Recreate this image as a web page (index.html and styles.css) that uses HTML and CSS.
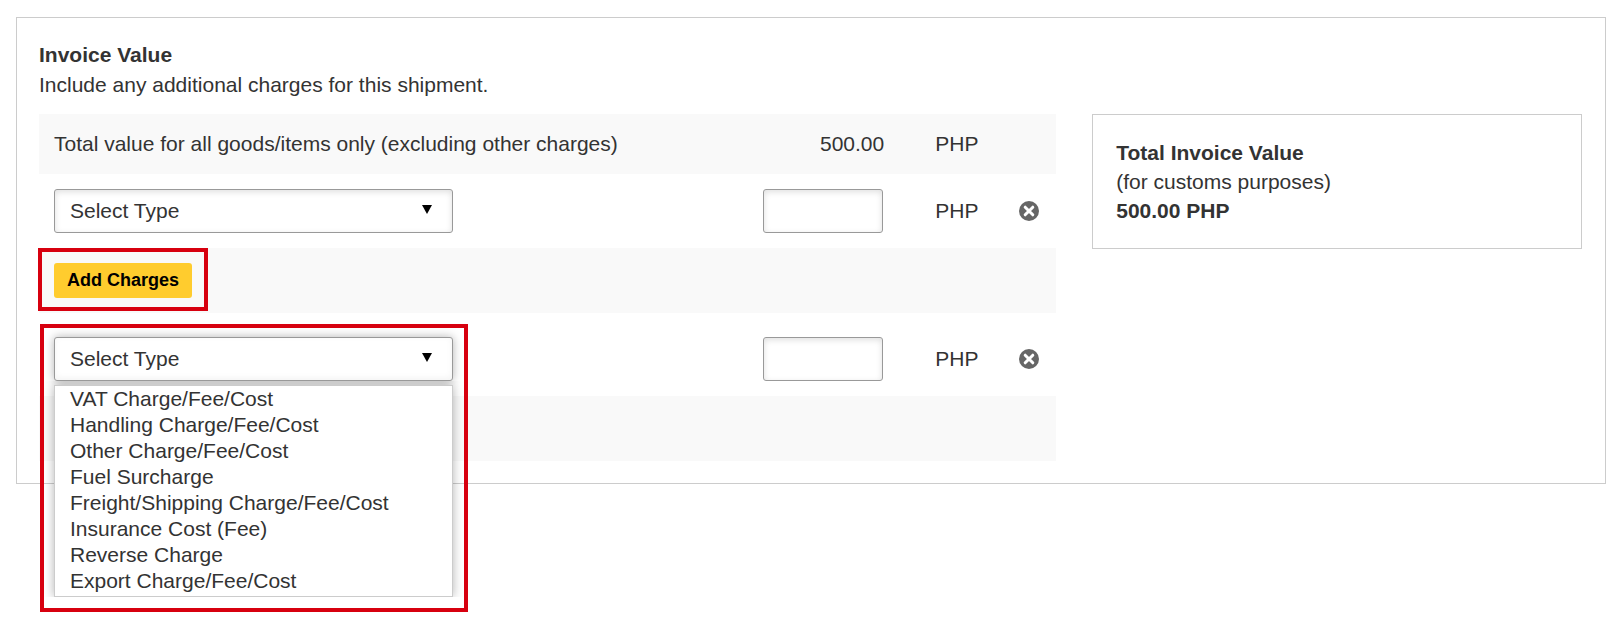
FILE: index.html
```html
<!DOCTYPE html>
<html lang="en">
<head>
    <meta charset="UTF-8">
    <meta name="viewport" content="width=device-width, initial-scale=1.0">
    <title>Invoice Value</title>
    <link rel="stylesheet" href="styles.css">
</head>
<body>
    <section class="panel">
        <h1 class="panel-title">Invoice Value</h1>
        <p class="panel-intro">Include any additional charges for this shipment.</p>

        <div class="columns">
            <table class="charges">
                <colgroup>
                    <col>
                    <col class="col-amount">
                    <col class="col-currency">
                    <col class="col-remove">
                </colgroup>
                <tbody>
                    <tr class="shaded">
                        <td>Total value for all goods/items only (excluding other charges)</td>
                        <td class="amount">500.00</td>
                        <td>PHP</td>
                        <td></td>
                    </tr>
                    <tr>
                        <td>
                            <div class="dropdown">
                                <select class="field" aria-label="Charge type">
                                    <option>Select Type</option>
                                </select>
                            </div>
                        </td>
                        <td class="amount"><input class="field amount-field" type="text" aria-label="Charge amount"></td>
                        <td>PHP</td>
                        <td>
                            <button class="remove" type="button" aria-label="Remove charge">
                                <svg viewBox="0 0 20 20" width="20" height="20">
                                    <circle cx="10" cy="10" r="10" fill="#666"/>
                                    <path d="M6.2 6.2l7.6 7.6M13.8 6.2l-7.6 7.6" stroke="#fff" stroke-width="3" stroke-linecap="round"/>
                                </svg>
                            </button>
                        </td>
                    </tr>
                    <tr class="shaded">
                        <td colspan="4">
                            <div class="callout callout-button">
                                <button class="add" type="button">Add Charges</button>
                            </div>
                        </td>
                    </tr>
                    <tr class="new-charge">
                        <td>
                            <div class="callout callout-dropdown">
                                <div class="dropdown open">
                                    <select class="field" aria-label="New charge type">
                                        <option>Select Type</option>
                                    </select>
                                    <ul class="options" role="listbox" aria-label="Charge types">
                                        <li role="option">VAT Charge/Fee/Cost</li>
                                        <li role="option">Handling Charge/Fee/Cost</li>
                                        <li role="option">Other Charge/Fee/Cost</li>
                                        <li role="option">Fuel Surcharge</li>
                                        <li role="option">Freight/Shipping Charge/Fee/Cost</li>
                                        <li role="option">Insurance Cost (Fee)</li>
                                        <li role="option">Reverse Charge</li>
                                        <li role="option">Export Charge/Fee/Cost</li>
                                    </ul>
                                </div>
                            </div>
                        </td>
                        <td class="amount"><input class="field amount-field" type="text" aria-label="New charge amount"></td>
                        <td>PHP</td>
                        <td>
                            <button class="remove" type="button" aria-label="Remove new charge">
                                <svg viewBox="0 0 20 20" width="20" height="20">
                                    <circle cx="10" cy="10" r="10" fill="#666"/>
                                    <path d="M6.2 6.2l7.6 7.6M13.8 6.2l-7.6 7.6" stroke="#fff" stroke-width="3" stroke-linecap="round"/>
                                </svg>
                            </button>
                        </td>
                    </tr>
                    <tr class="shaded spacer">
                        <td colspan="4"></td>
                    </tr>
                </tbody>
            </table>

            <aside class="summary">
                <h2 class="summary-title">Total Invoice Value</h2>
                <p>(for customs purposes)</p>
                <p><strong>500.00 PHP</strong></p>
            </aside>
        </div>
    </section>
</body>
</html>
```

FILE: styles.css
```css
* {
    box-sizing: border-box;
}

body {
    display: flow-root;
    min-height: 100vh;
    margin: 0;
    background-color: white;
    color: #333;
    font-family: "Liberation Sans", Arial, sans-serif;
    font-size: 21px;
    line-height: 30px;
}

h1, h2, p, ul {
    margin: 0;
    padding: 0;
    font-size: 21px;
}

.panel {
    margin: 17px 15px 0 16px;
    padding: 22px 23px 22px 22px;
    border: 1px solid #ccc;
}

.columns {
    display: grid;
    grid-template-columns: 27fr 13fr;
    gap: 36px;
    align-items: start;
    margin-top: 14px;
}

/* Charges table */
.charges {
    width: 100%;
    border-collapse: collapse;
    table-layout: fixed;
}

.col-amount {
    width: 172px;
}

.col-currency {
    width: 82px;
}

.col-remove {
    width: 54px;
}

.charges td {
    padding: 15px;
    vertical-align: middle;
}

.charges .amount {
    padding-right: 36px;
    text-align: right;
}

.shaded {
    background-color: #f9f9f9;
}

.charges .new-charge td {
    padding-top: 24px;
}

.spacer {
    height: 65px;
}

/* Fields */
.field {
    display: block;
    width: 100%;
    height: 44px;
    margin: 0;
    padding: 0 15px 2px;
    border: 1px solid #999;
    border-radius: 3px;
    background-color: white;
    box-shadow: inset 0 2px 6px rgba(0, 0, 0, 0.13);
    color: #333;
    font-family: inherit;
    font-size: 21px;
    appearance: none;
}

.amount-field {
    width: 120px;
}

.dropdown {
    position: relative;
    max-width: 399px;
}

.dropdown::after {
    content: "";
    position: absolute;
    top: 16px;
    right: 21px;
    width: 10px;
    height: 9px;
    background-color: black;
    clip-path: polygon(0 0, 100% 0, 50% 100%);
    pointer-events: none;
}

.open .field {
    box-shadow: 0 0 10px rgba(0, 0, 0, 0.3), inset 0 -2px 6px rgba(0, 0, 0, 0.05);
}

.options {
    position: absolute;
    top: 48px;
    left: 0;
    z-index: 1;
    width: 100%;
    padding-bottom: 2px;
    border: 1px solid #ccc;
    background-color: white;
    box-shadow: 0 0 10px rgba(0, 0, 0, 0.3);
    clip-path: inset(-4px -12px 0 -12px);
    line-height: 26px;
    list-style: none;
}

.options li {
    padding: 0 15px;
}

/* Buttons */
.add {
    display: block;
    width: 138px;
    height: 35px;
    padding: 0;
    border: none;
    border-radius: 3px;
    background-color: #ffcc2e;
    color: black;
    font-family: inherit;
    font-size: 18px;
    font-weight: bold;
}

.remove {
    display: block;
    width: 24px;
    height: 24px;
    padding: 2px;
    border: none;
    background: none;
}

.remove svg {
    display: block;
}

/* Red callout frames */
.callout {
    position: relative;
    width: fit-content;
}

.callout::before {
    content: "";
    position: absolute;
    border: 4px solid #d7000f;
    pointer-events: none;
}

.callout-button::before {
    top: -15px;
    right: -16px;
    bottom: -13px;
    left: -16px;
}

.callout-dropdown {
    width: 100%;
    max-width: 399px;
}

.callout-dropdown::before {
    top: -13px;
    right: -15px;
    left: -14px;
    height: 280px;
}

/* Summary box */
.summary {
    padding: 23px;
    border: 1px solid #ccc;
    line-height: 29px;
}
```
